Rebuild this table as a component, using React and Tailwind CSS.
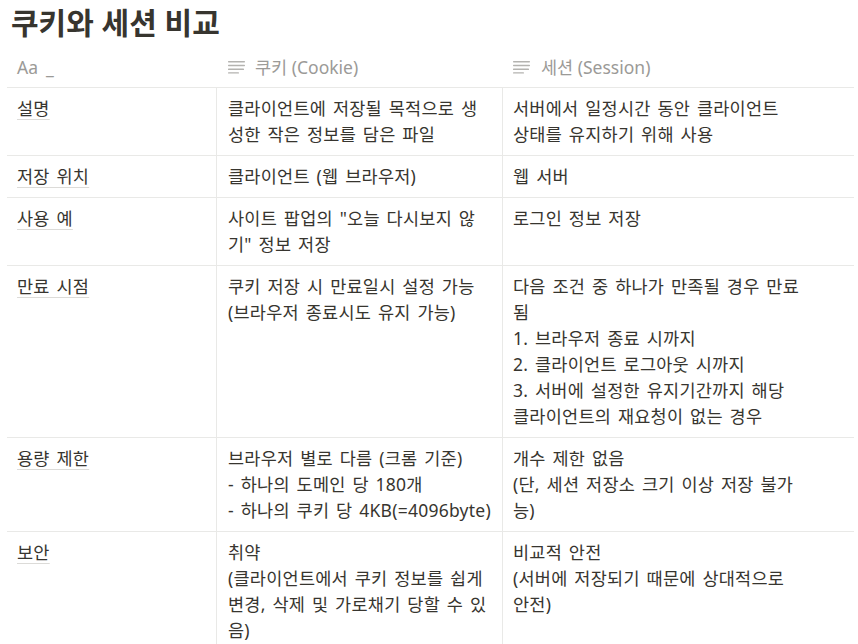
import React from "react";

const rows = [
  {
    name: "설명",
    a: ["클라이언트에 저장될 목적으로 생", "성한 작은 정보를 담은 파일"],
    b: ["서버에서 일정시간 동안 클라이언트", "상태를 유지하기 위해 사용"],
  },
  { name: "저장 위치", a: ["클라이언트 (웹 브라우저)"], b: ["웹 서버"] },
  {
    name: "사용 예",
    a: ['사이트 팝업의 "오늘 다시보지 않', '기" 정보 저장'],
    b: ["로그인 정보 저장"],
  },
  {
    name: "만료 시점",
    a: ["쿠키 저장 시 만료일시 설정 가능", "(브라우저 종료시도 유지 가능)"],
    b: [
      "다음 조건 중 하나가 만족될 경우 만료",
      "됨",
      "1. 브라우저 종료 시까지",
      "2. 클라이언트 로그아웃 시까지",
      "3. 서버에 설정한 유지기간까지 해당",
      "클라이언트의 재요청이 없는 경우",
    ],
  },
  {
    name: "용량 제한",
    a: ["브라우저 별로 다름 (크롬 기준)", "- 하나의 도메인 당 180개", "- 하나의 쿠키 당 4KB(=4096byte)"],
    b: ["개수 제한 없음", "(단, 세션 저장소 크기 이상 저장 불가", "능)"],
  },
  {
    name: "보안",
    a: ["취약", "(클라이언트에서 쿠키 정보를 쉽게", "변경, 삭제 및 가로채기 당할 수 있", "음)"],
    b: ["비교적 안전", "(서버에 저장되기 때문에 상대적으로", "안전)"],
  },
];

function TextIcon() {
  return (
    <svg width="18" height="14" viewBox="0 0 18 14" className="shrink-0">
      <g fill="#b4b3b0">
        <rect x="0" y="1" width="17" height="1.4" rx="0.6" />
        <rect x="0" y="4.8" width="17" height="1.4" rx="0.6" />
        <rect x="0" y="8.6" width="16" height="1.4" rx="0.6" />
        <rect x="0" y="12.2" width="11" height="1.4" rx="0.6" />
      </g>
    </svg>
  );
}

function Lines({ lines }) {
  return (
    <>
      {lines.map((l, i) => (
        <div key={i} className="whitespace-pre">
          {l}
        </div>
      ))}
    </>
  );
}

export default function App() {
  return (
    <div
      className="w-[858px] h-[644px] overflow-hidden bg-white text-[#37352f]"
      style={{ fontFamily: '"Noto Sans", "Noto Sans CJK KR", sans-serif' }}
    >
      <div className="pl-[11px] pt-[4px] pb-[5px] text-[30px] leading-[38px] font-bold tracking-[0px]">
        쿠키와 세션 비교
      </div>
      <div className="ml-[7px] w-[847px] text-[17.5px] leading-[26px] tracking-[0.25px] [word-spacing:2px]">
        <div className="flex h-[41px] border-b border-[#e9e9e7] text-[#9b9a97] tracking-[0px] [word-spacing:0px]">
          <div className="w-[210px] shrink-0 pl-[10px] flex items-center gap-[8px]">
            <span>Aa</span>
            <span>_</span>
          </div>
          <div className="w-[286px] shrink-0 pl-[11px] flex items-center gap-[9px]">
            <TextIcon />
            <span>쿠키 (Cookie)</span>
          </div>
          <div className="flex-1 pl-[10px] flex items-center gap-[10px]">
            <TextIcon />
            <span>세션 (Session)</span>
          </div>
        </div>
        {rows.map((r, i) => (
          <div key={i} className="flex border-b border-[#e9e9e7]">
            <div className="w-[210px] shrink-0 border-r border-[#e9e9e7] pl-[10px] pt-[7px] pb-[8px]">
              <span className="underline decoration-[#dcdbd8] decoration-1 underline-offset-[4px]">
                {r.name}
              </span>
            </div>
            <div className="w-[286px] shrink-0 border-r border-[#e9e9e7] pl-[11px] pt-[7px] pb-[8px]">
              <Lines lines={r.a} />
            </div>
            <div className="flex-1 pl-[10px] pt-[7px] pb-[8px]">
              <Lines lines={r.b} />
            </div>
          </div>
        ))}
      </div>
    </div>
  );
}
